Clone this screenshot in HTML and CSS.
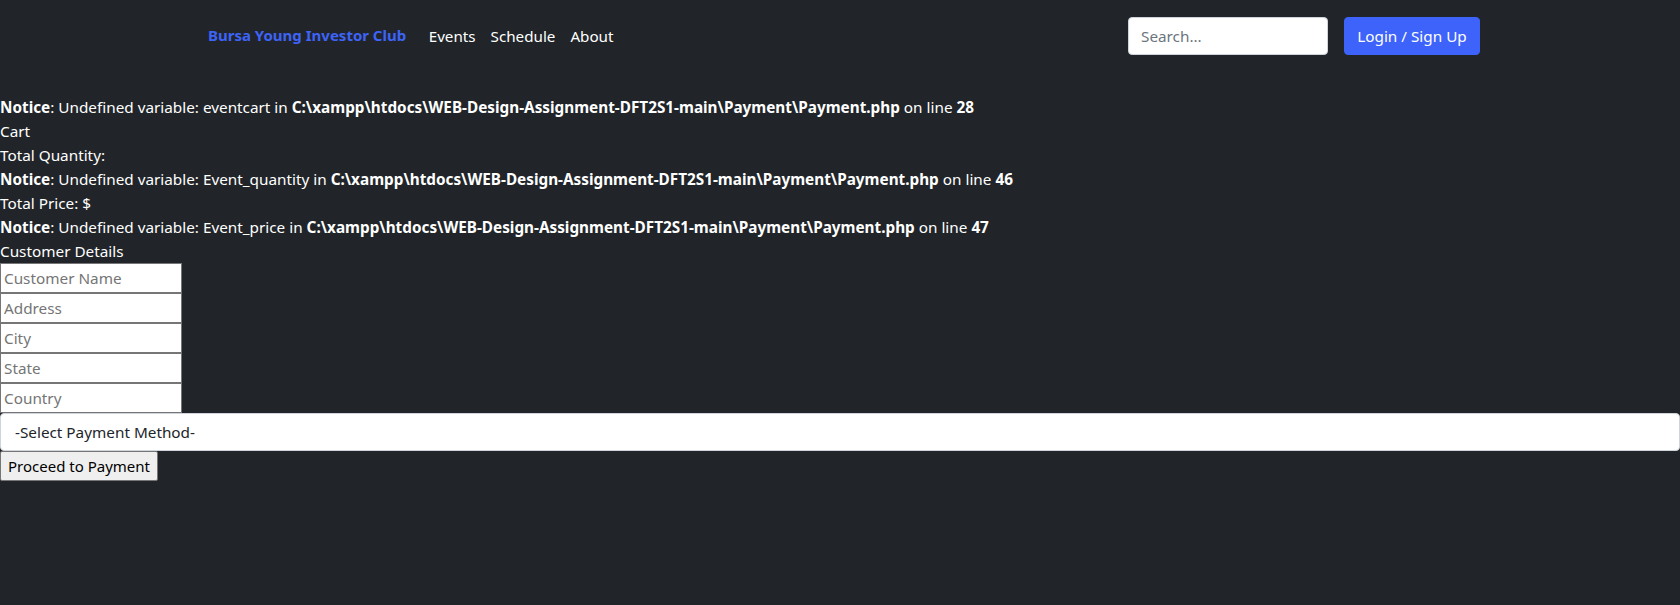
FILE: index.html
```html
<!DOCTYPE html>
<html lang="en">
<head>
<meta charset="utf-8">
<title>Payment</title>
<link rel="stylesheet" href="styles.css">
</head>
<body>
<header class="navbar">
  <div class="nav-left">
    <a class="brand" href="#">Bursa Young Investor Club</a>
    <nav class="nav-links">
      <a class="nav-link" href="#">Events</a>
      <a class="nav-link" href="#">Schedule</a>
      <a class="nav-link" href="#">About</a>
    </nav>
  </div>
  <form class="nav-right">
    <input class="search" type="search" placeholder="Search...">
    <button class="login" type="button">Login / Sign Up</button>
  </form>
</header>
<main class="content">
  <div class="line spacer"></div>
  <div class="line"><b>Notice</b>: Undefined variable: eventcart in <b>C:\xampp\htdocs\WEB-Design-Assignment-DFT2S1-main\Payment\Payment.php</b> on line <b>28</b></div>
  <div class="line">Cart</div>
  <div class="line">Total Quantity:</div>
  <div class="line"><b>Notice</b>: Undefined variable: Event_quantity in <b>C:\xampp\htdocs\WEB-Design-Assignment-DFT2S1-main\Payment\Payment.php</b> on line <b>46</b></div>
  <div class="line">Total Price: $</div>
  <div class="line"><b>Notice</b>: Undefined variable: Event_price in <b>C:\xampp\htdocs\WEB-Design-Assignment-DFT2S1-main\Payment\Payment.php</b> on line <b>47</b></div>
  <div class="line">Customer Details</div>
  <form class="details">
    <input class="field" type="text" placeholder="Customer Name">
    <input class="field" type="text" placeholder="Address">
    <input class="field" type="text" placeholder="City">
    <input class="field" type="text" placeholder="State">
    <input class="field" type="text" placeholder="Country">
    <select class="method">
      <option>-Select Payment Method-</option>
    </select>
    <button class="proceed" type="button">Proceed to Payment</button>
  </form>
</main>
</body>
</html>
```
FILE: styles.css
```css
* { box-sizing: border-box; }
html, body { margin: 0; }
body {
  background: #212529;
  color: #ffffff;
  font-family: "Noto Sans", "Open Sans", sans-serif;
  font-size: 15.3px;
  line-height: 24px;
  height: 605px;
  overflow: hidden;
}
.navbar {
  height: 71px;
  display: flex;
  align-items: center;
  padding: 0 200px 0 208px;
}
.nav-left { display: flex; align-items: center; }
.brand {
  color: #3d63f7;
  font-weight: 700;
  font-size: 15px;
  text-decoration: none;
  margin-right: 15px;
  margin-top: -1px;
}
.nav-links { display: flex; }
.nav-link {
  color: #ffffff;
  text-decoration: none;
  padding: 0 7.5px;
  font-size: 15.2px;
}
.nav-right {
  margin: 0 0 0 auto;
  display: flex;
  align-items: center;
  gap: 16px;
}
.search {
  width: 200px;
  height: 38px;
  border: 1px solid #ced4da;
  border-radius: 4px;
  padding: 6px 12px;
  font-family: inherit;
  font-size: 15.3px;
  color: #212529;
  background: #fff;
  outline: none;
}
.search::placeholder { color: #6c757d; }
.login {
  width: 136px;
  height: 38px;
  border: 1px solid #3d63fb;
  border-radius: 4px;
  background: #3d63fb;
  color: #fff;
  font-family: inherit;
  font-size: 15.3px;
  padding: 0 12px;
}
.content { display: block; }
.line { height: 24px; white-space: nowrap; }
.details { display: flex; flex-direction: column; align-items: flex-start; }
.field {
  width: 182px;
  height: 30px;
  border: 1px solid #767676;
  padding: 1px 3px;
  font-family: inherit;
  font-size: 15.3px;
  color: #000;
  background: #fff;
  border-radius: 0;
  outline: none;
}
.field::placeholder { color: #757575; }
.method {
  width: 100%;
  height: 38px;
  border: 1px solid #ced4da;
  border-radius: 4px;
  padding: 0 14px;
  font-family: inherit;
  font-size: 15.3px;
  color: #212529;
  background: #fff;
  -webkit-appearance: none;
  appearance: none;
}
.proceed {
  width: 158px;
  height: 30px;
  border: 1px solid #767676;
  border-radius: 2px;
  background: #efefef;
  color: #000;
  font-family: inherit;
  font-size: 15px;
  padding: 1px 4px;
  white-space: nowrap;
}
```
